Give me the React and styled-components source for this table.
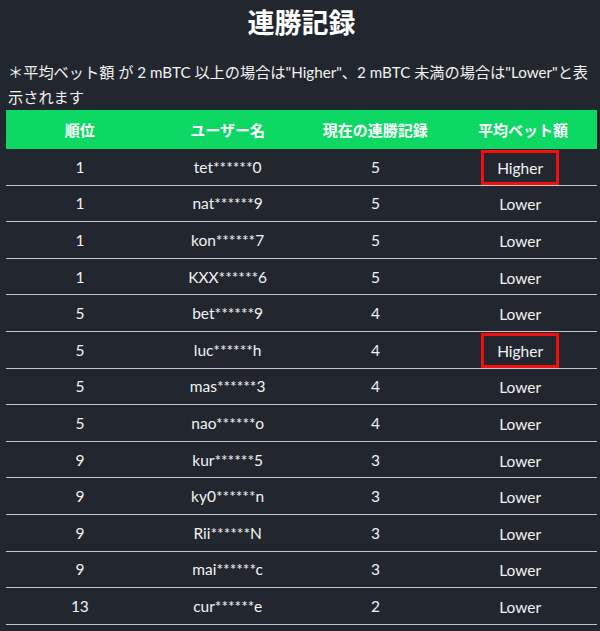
import React from 'react';
import styled, { createGlobalStyle } from 'styled-components';

const GlobalStyle = createGlobalStyle`
  html, body {
    margin: 0;
    padding: 0;
    background-color: #22272f;
  }
  body {
    font-family: "Lato", "Noto Sans CJK JP", sans-serif;
    color: #f2f2f2;
  }
`;

const Page = styled.div`
  width: 600px;
  min-height: 631px;
  background-color: #22272f;
  padding: 0 3px 0 6px;
  box-sizing: border-box;
  overflow: hidden;
`;

const Title = styled.h1`
  margin: 0;
  padding-top: 4px;
  height: 40px;
  text-align: center;
  font-family: "Noto Sans CJK JP", sans-serif;
  font-size: 27px;
  font-weight: 700;
  line-height: 36px;
  color: #ffffff;
`;

const Note = styled.p`
  margin: 0;
  padding: 16px 0 0 2px;
  font-family: "Lato", "Noto Sans CJK JP", sans-serif;
  font-size: 15.2px;
  line-height: 25px;
  color: #f2f2f2;
  height: 66px;
  box-sizing: border-box;
  word-break: break-all;
  line-break: anywhere;
`;

const Table = styled.div`
  display: grid;
  grid-template-columns: repeat(4, 1fr);
  width: 591px;
`;

const HeadCell = styled.div`
  background-color: #0dd864;
  height: 39px;
  display: flex;
  align-items: center;
  justify-content: center;
  font-family: "Noto Sans CJK JP", sans-serif;
  font-weight: 700;
  font-size: 15px;
  color: #ffffff;
`;

const Cell = styled.div`
  height: 35.6px;
  border-bottom: 1px solid #c4c6c9;
  display: flex;
  align-items: center;
  justify-content: center;
  font-family: "Lato", sans-serif;
  font-size: 15.5px;
  color: #f2f2f2;
`;

const Badge = styled.span`
  display: flex;
  align-items: center;
  justify-content: center;
  width: 78px;
  height: 35px;
  margin-top: 2px;
  margin-left: -6px;
  box-sizing: border-box;
  border: ${({ $marked }) => ($marked ? '3px solid #f40f0f' : '3px solid transparent')};
`;

const rows = [
  ['1', 'tet******0', '5', 'Higher'],
  ['1', 'nat******9', '5', 'Lower'],
  ['1', 'kon******7', '5', 'Lower'],
  ['1', 'KXX******6', '5', 'Lower'],
  ['5', 'bet******9', '4', 'Lower'],
  ['5', 'luc******h', '4', 'Higher'],
  ['5', 'mas******3', '4', 'Lower'],
  ['5', 'nao******o', '4', 'Lower'],
  ['9', 'kur******5', '3', 'Lower'],
  ['9', 'ky0******n', '3', 'Lower'],
  ['9', 'Rii******N', '3', 'Lower'],
  ['9', 'mai******c', '3', 'Lower'],
  ['13', 'cur******e', '2', 'Lower'],
];

const heads = ['順位', 'ユーザー名', '現在の連勝記録', '平均ベット額'];

const App = () => (
  <Page>
    <GlobalStyle />
    <Title>連勝記録</Title>
    <Note>＊平均ベット額 が 2 mBTC 以上の場合は"Higher"、2 mBTC 未満の場合は"Lower"と表示されます</Note>
    <Table>
      {heads.map((h) => (
        <HeadCell key={h}>{h}</HeadCell>
      ))}
      {rows.map((r, i) => (
        <React.Fragment key={i}>
          <Cell>{r[0]}</Cell>
          <Cell>{r[1]}</Cell>
          <Cell>{r[2]}</Cell>
          <Cell>
            <Badge $marked={r[3] === 'Higher'}>{r[3]}</Badge>
          </Cell>
        </React.Fragment>
      ))}
    </Table>
  </Page>
);

export default App;
